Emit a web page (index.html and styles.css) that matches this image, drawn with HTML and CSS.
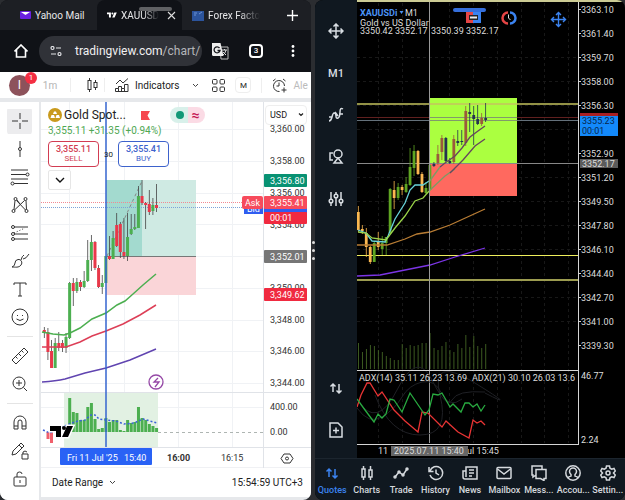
FILE: index.html
```html
<!DOCTYPE html>
<html lang="en">
<head>
    <meta charset="UTF-8">
    <meta name="viewport" content="width=device-width, initial-scale=1.0">
    <title>XAUUSD</title>
    <link rel="stylesheet" href="styles.css">
</head>
<body>
<div class="screen">
    <!-- Browser with the TradingView chart -->
    <section class="browser">
        <div class="handle"></div>
        <nav class="tabs">
            <a class="tab" href="#mail">
                <svg width="11" height="8" viewBox="0 0 11 8"><rect width="11" height="8" rx="1" fill="#6a1fe0"/><path d="M1 1l4.500 3L10 1z" fill="#fff"/></svg>
                <span>Yahoo Mail</span>
            </a>
            <a class="tab current" href="#chart">
                <svg width="10" height="6" viewBox="0 0 23 12" fill="#fff"><path d="M0 0h9v12H4.500V4.500H0zM17 0h5.500l-5 12H12z"/><circle cx="12.500" cy="2.300" r="2.300"/></svg>
                <span class="fade">XAUUSD</span>
            </a>
            <button class="close" aria-label="Close tab"><svg width="9" height="9" viewBox="0 0 9 9" stroke="#ddd" stroke-width="1.100"><path d="M1 1l7 7M8 1L1 8"/></svg></button>
            <a class="tab last" href="#forex">
                <svg width="12" height="11" viewBox="0 0 12 11"><path d="M0 1h12v10H0z" fill="#2c549c"/><path d="M2 3h3M2 5h2M7 4l3-2" stroke="#6d93d4"/></svg>
                <span class="fade">Forex Facto</span>
            </a>
            <button class="plus" aria-label="New tab"><svg width="11" height="11" viewBox="0 0 11 11" stroke="#fff" stroke-width="1.400"><path d="M5.500 0v11M0 5.500h11"/></svg></button>
        </nav>
        <div class="address">
            <button aria-label="Home"><svg width="14" height="14" viewBox="0 0 14 14" fill="none" stroke="#fff" stroke-width="1.600"><path d="M.5 7.500L7 1l6.500 6.500M2.500 6V13h9V6"/></svg></button>
            <div class="url">
                <svg width="12" height="10" viewBox="0 0 12 10" fill="none" stroke="#e4e5e8" stroke-width="1.200"><circle cx="2.500" cy="2" r="1.500"/><path d="M6 2h5M1 8h5"/><circle cx="9.500" cy="8" r="1.500"/></svg>
                <a href="#chart">tradingview.com<span>/chart/</span></a>
            </div>
            <button aria-label="Translate"><svg width="17" height="17" viewBox="0 0 17 17"><path d="M8 4h8v12H9z" fill="none" stroke="#bbb"/><path d="M0 0h8.500l3 13H1.500Q0 13 0 11.500z" fill="#eee"/><path d="M7.500 5a3 3 0 1 0 .5 2.500H5.500" fill="none" stroke="#14161b" stroke-width="1.300"/><path d="M10 7h5M12.500 6v1M14 7q-1 4-3 5M11 9l3 3" stroke="#ddd" fill="none"/></svg></button>
            <button class="count" aria-label="Open tabs">3</button>
            <button aria-label="Menu"><svg width="4" height="12" viewBox="0 0 4 12" fill="#fff"><circle cx="2" cy="1.500" r="1.400"/><circle cx="2" cy="6" r="1.400"/><circle cx="2" cy="10.500" r="1.400"/></svg></button>
        </div>

        <div class="tools">
            <button class="avatar">I<span class="badge">1</span></button>
            <button class="interval">1m</button>
            <button class="sep candles" aria-label="Candles"><svg width="12" height="14" viewBox="0 0 12 14" fill="none" stroke="#333"><rect x="1" y="2.500" width="3" height="9"/><path d="M2.500 0v2.500M2.500 11.500V14M8.500 2v2.500M8.500 9.500V12"/><rect x="7" y="4.500" width="3" height="5"/></svg></button>
            <button class="sep indicators"><svg width="14" height="14" viewBox="0 0 14 14" fill="none" stroke="#333"><path d="M1 6l4-4 3 3 5-4.500M.5 13.500v-3h3V8.500h3v2h3v-4h3.500v7zM3.500 10.500v3M6.500 10.500v3M9.500 10.500v3"/></svg>Indicators</button>
            <button aria-label="More indicators"><svg width="7" height="5" viewBox="0 0 7 5" fill="none" stroke="#444"><path d="M1 1l2.500 2.500L6 1"/></svg></button>
            <button class="layouts" aria-label="Layouts"><svg width="13" height="13" viewBox="0 0 13 13" fill="none" stroke="#333"><rect x=".5" y=".5" width="4.500" height="4.500" rx="1"/><rect x="8" y=".5" width="4.500" height="4.500" rx="1"/><rect x=".5" y="8" width="4.500" height="4.500" rx="1"/><rect x="8" y="8" width="4.500" height="4.500" rx="1"/></svg></button>
            <button class="layout-name">M</button>
            <button class="sep alert"><svg width="15" height="15" viewBox="0 0 15 15" fill="none" stroke="#333"><path d="M12.500 8a5.500 5.500 0 1 0-5 5.500M7 4.500V8H4.500M1 3l2.500-2M11 1l2.500 2M12 9.500v5M9.500 12h5"/></svg>Ale</button>
        </div>

        <div class="workspace">
            <aside class="draw">
                <button class="on" aria-label="Cross"><svg viewBox="0 0 20 20"><path d="M10 2v6M10 12v6M2 10h6M12 10h6"/></svg></button>
                <button aria-label="Vertical line"><svg viewBox="0 0 20 20"><path d="M10 2v6.500M10 11.500V18"/><circle cx="10" cy="10" r="1.500"/></svg></button>
                <button aria-label="Fib lines"><svg viewBox="0 0 20 20"><path d="M1 3h17M1 7.500h15M1 12h17M4 16.500h14"/><circle cx="17.500" cy="7.500" r="1.500"/><circle cx="2.500" cy="16.500" r="1.500"/></svg></button>
                <button aria-label="Patterns"><svg viewBox="0 0 20 20"><path d="M4 14.500L5 5.500M6.500 5.500L15.500 15M14.500 5.500L4.500 15M16 5.500l.5 9M7 5l3 4"/><circle cx="5.500" cy="4" r="1.500"/><circle cx="15.500" cy="4" r="1.500"/><circle cx="3.500" cy="16" r="1.500"/><circle cx="16.500" cy="16" r="1.500"/></svg></button>
                <button aria-label="Position"><svg viewBox="0 0 20 20"><path d="M4 4h14M4 11h14M4 16h14"/><path d="M4 10l11-5" stroke-dasharray="1 2"/><circle cx="3" cy="4" r="1.500"/><circle cx="3" cy="11" r="1.500"/><circle cx="3" cy="16" r="1.500"/></svg></button>
                <button aria-label="Brush"><svg viewBox="0 0 20 20"><path d="M2 16q3-1 3-4 0-3 3-3.500c3-.5 5 3 3 5.500-2 3-6 2-9 2M11 9q1-4 3-5M13 8q3 0 6-5"/></svg></button>
                <button aria-label="Text"><svg viewBox="0 0 20 20"><path d="M4 6V4h12v2M10 4v13M8 17h4"/></svg></button>
                <button aria-label="Emoji"><svg viewBox="0 0 20 20"><circle cx="10" cy="10" r="8"/><path d="M7.500 8v1M12.500 8v1M6.500 12q3.500 3 7 0"/></svg></button>
                <hr>
                <button aria-label="Measure"><svg viewBox="0 0 20 20"><path d="M2 14L14 2l4 4L6 18zM6 11l1.500 1.500M9 8l2 2M12 5l1.500 1.500"/></svg></button>
                <button aria-label="Zoom"><svg viewBox="0 0 20 20"><circle cx="9" cy="9" r="6"/><path d="M13.500 13.500L17 17M9 6v6M6 9h6"/></svg></button>
                <hr>
                <button aria-label="Magnet"><svg viewBox="0 0 20 20"><path d="M4 16V9a6 6 0 0 1 12 0v7h-4V9a2 2 0 0 0-4 0v7zM4 13h4M12 13h4"/></svg></button>
                <button aria-label="Keep drawing"><svg viewBox="0 0 20 20"><path d="M2 14l1-4 8-8 3 3-8 8zM9 4l3 3M12 13h6v5h-6zM13 13v-2q2-2 4 0"/></svg></button>
                <button aria-label="Lock"><svg viewBox="0 0 20 20"><rect x="4" y="8" width="12" height="9" rx="1"/><path d="M7 8V5q0-2 2.500-2T12 5M10 11v3"/></svg></button>
            </aside>

            <div class="chart-side">
                <div class="chart">
                    <svg id="tv" class="plot" viewBox="41 102 270 366">
                        <g stroke="#f0f2f5">
                            <path d="M41 129.500H263M41 161.500H263M41 193.500H263M41 224.500H263M41 256.500H263M41 288.500H263M41 320.500H263M41 351.500H263M41 383.500H263M41 407.500H263M69.500 102V447M124.500 102V447M178.500 102V447M232.500 102V447"/>
                        </g>
                        <rect x="106" y="180" width="90" height="76" fill="#cfeae3"/>
                        <rect x="106" y="180" width="36" height="76" fill="#a3dacf"/>
                        <rect x="106" y="256" width="90" height="39" fill="#fad5d8"/>
                        <path d="M106 256.500h90" stroke="#777"/>
                        <path d="M107 256L142 181" stroke="#888" stroke-dasharray="3 3"/>
                        <rect x="64" y="393" width="94" height="54" fill="#e2f1e3"/>
                        <path d="M41 202.500H263" stroke="#f08a92" stroke-dasharray="1 1"/>
                        <path d="M41 207.500H263" stroke="#7ba3d8" stroke-dasharray="1 1"/>
                        <g id="tvCandles"></g>
                        <g fill="none" stroke-width="1.500">
                            <path stroke="#4caf50" d="M42 332L53 334L64 335L70 333L80 328L92 319L106 313L117 305L125 301L133 294L143 285L156 274"/>
                            <path stroke="#dd3f57" d="M42 347H66L80 342L92 336L106 331L123 324L140 315L156 305"/>
                            <path stroke="#6044b0" d="M42 382Q56 381 65 379L85 373L106 368L130 360L156 349"/>
                            <path stroke="#3b62d8" stroke-dasharray="2 2" d="M43 430L50 433L60 428L72 423L78 421L85 420L91 415L95 415L99 419L106 420L116 421L124 424L134 423L143 419L150 421L157 423"/>
                        </g>
                        <path d="M158 432.500H263" stroke="#aeb5b2" stroke-dasharray="3 3"/>
                        <path d="M50 426h11v11h-5v-6h-6zM67 426h6l-5 11h-6z" stroke="#fff" stroke-width="3"/>
                        <path d="M50 426h11v11h-5v-6h-6zM67 426h6l-5 11h-6z"/><circle cx="64" cy="428" r="2"/>
                        <path d="M41 392.500H311M41 447.500H311M41 468H311M263.500 102V468" stroke="#e0e3e8" fill="none"/>
                        <path d="M106 102V447" stroke="#3564cf" stroke-width="1.500"/>
                        <circle cx="156" cy="382" r="7" fill="#fff" stroke="#9548a6" stroke-width="1.300"/>
                        <path d="M158 378l-4 4h5l-4 5" fill="none" stroke="#9548a6" stroke-width="1.300"/>
                        <g class="axis">
                            <text x="270" y="132">3,360.00</text><text x="270" y="164">3,358.00</text>
                            <text x="270" y="196">3,356.00</text><text x="270" y="228">3,354.00</text>
                            <text x="270" y="291">3,350.00</text><text x="270" y="323">3,348.00</text>
                            <text x="270" y="354">3,346.00</text><text x="270" y="386">3,344.00</text>
                            <text x="270" y="410">400.00</text><text x="270" y="435">0.00</text>
                        </g>
                        <rect x="244" y="204" width="19" height="10" fill="#2f5df0"/>
                        <g class="tag"><text x="247" y="212">Bid</text></g>
                        <rect x="264" y="208" width="43" height="8" fill="#2f5df0"/>
                        <rect x="264" y="174" width="43" height="13" rx="1" fill="#089273"/>
                        <rect x="264" y="212" width="43" height="12" rx="1" fill="#f02a40"/>
                        <rect x="264" y="196" width="43" height="13" rx="1" fill="#f74b5c"/>
                        <rect x="242" y="196" width="21" height="13" rx="2" fill="#f74b5c"/>
                        <rect x="264" y="250" width="43" height="13" rx="1" fill="#767676"/>
                        <rect x="264" y="288" width="43" height="13" rx="1" fill="#f02a40"/>
                        <g class="tag">
                            <text x="270" y="184">3,356.80</text><text x="270" y="206">3,355.41</text><text x="270" y="221">00:01</text>
                            <text x="245" y="206">Ask</text><text x="270" y="260">3,352.01</text><text x="270" y="298">3,349.62</text>
                        </g>
                        <rect x="60" y="448" width="92" height="17" rx="1" fill="#2962f5"/>
                        <g class="tag"><text x="67" y="461">Fri 11 Jul '25</text><text x="124" y="461">15:40</text></g>
                        <g class="axis"><text class="bold" x="167" y="461">16:00</text><text x="221" y="461">16:15</text></g>
                        <path d="M284 454h6l3 4.500-3 4.500h-6l-3-4.500z" fill="none" stroke="#333"/><circle cx="287" cy="458.500" r="1.500" fill="none" stroke="#333"/>
                    </svg>

                    <div class="legend">
                        <div class="symbol">
                            <svg width="14" height="14" viewBox="0 0 14 14"><circle cx="7" cy="7" r="7" fill="#c99a1c"/><path d="M5 6l1-2.500h2L9 6zM2.500 10l1-3h2.500l1 3zM7.500 10l1-3H11l1 3z" fill="#fff"/></svg>
                            <h1>Gold Spot...</h1>
                            <svg width="9" height="9" viewBox="0 0 9 9"><path d="M0 0h9L6.500 4.500 9 9H0z" fill="#f5474f"/></svg>
                            <span class="status"><i></i><b>≈</b></span>
                        </div>
                        <p class="change">3,355.11 +31.35 (+0.94%)</p>
                        <div class="trade">
                            <button class="sell"><b>3,355.11</b>SELL</button>
                            <span>30</span>
                            <button class="buy"><b>3,355.41</b>BUY</button>
                        </div>
                        <button class="collapse" aria-label="Collapse"><svg width="10" height="6" viewBox="0 0 10 6" fill="none" stroke="#111" stroke-width="1.400"><path d="M1 1l4 4 4-4"/></svg></button>
                    </div>
                    <select class="currency" aria-label="Currency"><option>USD</option></select>
                    <svg class="arrow" width="6" height="4" viewBox="0 0 6 4" fill="none" stroke="#222" stroke-width="1.200"><path d="M1 .5l2 2 2-2"/></svg>
                </div>
                <footer class="range">
                    <button>Date Range <svg width="7" height="5" viewBox="0 0 7 5" fill="none" stroke="#444"><path d="M1 1l2.500 2.500L6 1"/></svg></button>
                    <span>15:54:59 UTC+3</span>
                </footer>
            </div>
        </div>
    </section>

    <div class="divider"><i></i><i></i><i></i></div>

    <!-- MetaTrader -->
    <section class="terminal">
        <div class="handle blue"></div>
        <div class="main">
            <aside class="rail">
                <button aria-label="Crosshair"><svg viewBox="0 0 16 16"><path d="M8 1v14M1 8h14M5.500 3.500L8 1l2.500 2.500M5.500 12.500L8 15l2.500-2.500M3.500 5.500L1 8l2.500 2.500M12.500 5.500L15 8l-2.500 2.500"/></svg></button>
                <button>M1</button>
                <button aria-label="Indicators"><svg viewBox="0 0 16 16"><path d="M1 14q2 0 3-4t2-4q2 0 2 3t2 2q2-1 2-6t3-3M1 10h3M7 5l3 4M11 7h4"/></svg></button>
                <button aria-label="Objects"><svg viewBox="0 0 16 16"><path d="M5 4H2v7h3M6 14h8l-4-5z"/><circle cx="10" cy="5" r="4"/></svg></button>
                <button aria-label="Settings"><svg viewBox="0 0 16 16"><path d="M3 1v7M3 12v3M8 1v2M8 7v8M13 1v7M13 12v3"/><circle cx="3" cy="10" r="1.800"/><circle cx="8" cy="5" r="1.800"/><circle cx="13" cy="10" r="1.800"/></svg></button>
                <button class="down" aria-label="Trade"><svg viewBox="0 0 16 16"><path d="M5 12V4M2.500 6.500L5 4l2.500 2.500M11 4v9M8.500 10.500L11 13l2.500-2.500"/></svg></button>
                <button aria-label="New order"><svg viewBox="0 0 16 16"><path d="M2 1h8l4 4v10H2zM8 5.500v6M5 8.500h6"/></svg></button>
            </aside>
            <svg class="plot" viewBox="357 0 268 458">
                <path d="M357 57.500H578M357 81.500H578M357 105.500H578M357 129.500H578M357 177.500H578M357 201.500H578M357 225.500H578M357 249.500H578M357 297.500H578M357 321.500H578M378.500 3V443M402.500 3V443M449.500 3V443M473.500 3V443M497.500 3V443M521.500 3V443M544.500 3V443M568.500 3V443" stroke="#181818" stroke-dasharray="3 3"/>
                <rect x="357" y="0" width="268" height="2" fill="#cccb94"/>
                <rect x="430" y="98" width="87" height="66" fill="#abff40"/>
                <rect x="430" y="164" width="87" height="32" fill="#ff695f"/>
                <path d="M357 104H578" stroke="#c4c35e" stroke-width="1.500"/>
                <path d="M357 117.500H578" stroke="#61201f"/>
                <path d="M357 120.500H578" stroke="#65717b"/>
                <path d="M357 163.500H578" stroke="#888"/>
                <path d="M357 255.500H578" stroke="#eeee5c" stroke-width="1.200"/>
                <path d="M357 280H578" stroke="#9c9c50" stroke-width="2"/>
                <path d="M430 117.500H517M430 120.500H517" stroke="#819b6b"/>
                <g id="mtCandles"></g>
                <g fill="none" stroke-width="1.300">
                    <path stroke="#68d3da" d="M358 230L366 233L372 241L385 242L388 236L395 219L405 203L410 190L415 185L423 185L429 181"/>
                    <path stroke="#9bd44a" d="M358 232L366 233L372 238L386 240L395 228L405 216L415 201L423 198L430 190"/>
                    <path stroke="#7d9a65" d="M429 182L440 167M430 190L445 176L455 169"/>
                    <path stroke="#66455e" d="M440 167L445 163L455 156L462 148L470 137L478 131L485 126M450 173L463 160L475 146L485 139"/>
                    <path stroke="#b97d34" d="M357 245H387L405 239L417 234L430 232L450 225L485 209"/>
                    <path stroke="#7c35e6" d="M357 276L380 275L405 270L430 265L455 257L485 248"/>
                </g>
                <path d="M429.500 2V443" stroke="#999"/>
                <g fill="none" stroke="#1f2025">
                    <path d="M357 408q12 17 25 9t20-20 20-15 20 12 20 5M357 400q20 30 40-10t35-10 20 20 33-8M375 395q15 40 45 40t20-40 35-12 10 10"/>
                </g>
                <g fill="none" stroke-width="1.300">
                    <path stroke="#e93434" d="M357 407L361 395L367 383H370L378 396L382 392L394 410L405 421L418 432L422 412L428 413L442 427L446 421L458 432L469 438L473 420L477 423L481 421L485 425"/>
                    <path stroke="#28ab40" d="M357 399L365 410L374 422L378 414L382 418L386 414L390 399L394 400L402 412L410 393L425 415L429 410L433 394L438 395L442 393L450 407L453 404L461 412L465 403L469 403L473 407L477 404L481 411L485 405"/>
                </g>
                <path d="M357 370.500H578M357 444.500H579M578.500 2V445M578 9.500h3M578 33.500h3M578 57.500h3M578 81.500h3M578 105.500h3M578 153.500h3M578 177.500h3M578 201.500h3M578 225.500h3M578 249.500h3M578 273.500h3M578 297.500h3M578 321.500h3M578 345.500h3" stroke="#d5d5d5" fill="none"/>
                <rect x="580" y="113" width="38" height="4" fill="#a81f22"/>
                <rect x="580" y="116" width="38" height="20" fill="#1389fa"/>
                <rect x="580" y="159" width="38" height="9" fill="#5b5b5b"/>
                <g class="mt-axis">
                    <text x="581" y="13">3363.10</text><text x="581" y="37">3361.40</text><text x="581" y="61">3359.70</text><text x="581" y="85">3358.00</text><text x="581" y="109">3356.30</text>
                    <text x="581" y="157">3352.90</text><text x="581" y="181">3351.20</text><text x="581" y="205">3349.50</text><text x="581" y="229">3347.80</text><text x="581" y="253">3346.10</text>
                    <text x="581" y="277">3344.40</text><text x="581" y="301">3342.70</text><text x="581" y="325">3341.00</text><text x="581" y="349">3339.30</text>
                    <text x="582" y="167">3352.17</text><text class="dark" x="582" y="124">3355.23</text><text class="dark" x="582" y="134">00:01</text>
                    <text x="581" y="379">46.77</text><text x="581" y="443">2.24</text>
                    <text x="359" y="381">ADX(14) 35.11 26.23 13.69</text><text x="472" y="381">ADX(21) 30.10 26.03 13.6</text>
                    <text x="378" y="454">11</text><text x="467" y="454">ul 15:45</text>
                    <rect x="391" y="446" width="77" height="10" fill="#666"/>
                    <text x="394" y="454">2025.07.11 15:40</text>
                    <text class="blue" x="360" y="16">XAUUSDi</text><text x="405" y="16">M1</text>
                    <text x="360" y="26">Gold vs US Dollar</text>
                    <text x="360" y="34">3350.42 3352.17</text><text x="431" y="34">3350.39 3352.17</text>
                </g>
                <path d="M399.500 11h4l-2 3z" fill="#4b93f5"/>
                <path d="M466 12h7v11h-7z" fill="#e54545"/><path d="M473 12h8v11h-8z" fill="#3b83f0"/>
                <path d="M469 15h9v5h-9z" fill="#222"/><path d="M470 17.500h7" stroke="#eee" stroke-width="2"/>
                <g fill="none">
                    <path d="M508 12.500a5.500 5.500 0 0 0 0 11" stroke="#e54545" stroke-width="2.500"/><path d="M510 12.500a5.500 5.500 0 0 1 0 11" stroke="#3b83f0" stroke-width="2.500"/><path d="M508.500 14.500V18l2 2" stroke="#ddd"/>
                    <path d="M558.500 13v13M552 19.500h13M556 15l2.500-2.500L561 15M556 24l2.500 2.500L561 24M554 17l-2.500 2.500L554 22M563 17l2.500 2.500L563 22" stroke="#3b83f0" stroke-width="1.400"/>
                </g>
            </svg>
        </div>
        <nav class="bottom">
            <a class="active" href="#quotes"><svg viewBox="0 0 16 16"><path d="M5 12V4M2.500 6.500L5 4l2.500 2.500M11 4v9M8.500 10.500L11 13l2.500-2.500"/></svg>Quotes</a>
            <a href="#charts"><svg viewBox="0 0 16 16"><path d="M3 4h3v8H3zM4.500 1v3M4.500 12v3M10 5h3v7h-3zM11.500 1v4M11.500 12v3"/></svg>Charts</a>
            <a href="#trade"><svg viewBox="0 0 16 16"><path d="M2 12l4-5 4 3 4-6"/><circle cx="2" cy="12" r="1"/><circle cx="6" cy="7" r="1"/><circle cx="10" cy="10" r="1"/><circle cx="14" cy="4" r="1"/></svg>Trade</a>
            <a href="#history"><svg viewBox="0 0 16 16"><path d="M2 6a6.500 6.500 0 1 1 0 4M1 2v4.500h4.500M8 4.500V8l3 2"/></svg>History</a>
            <a href="#news"><svg viewBox="0 0 16 16"><path d="M4 2h11v12H3q-2 0-2-2V6h3zM4 6v6M7 5h5M7 8h5M7 11h3"/></svg>News</a>
            <a href="#mailbox"><svg viewBox="0 0 16 16"><rect x="1" y="2.500" width="14" height="11" rx="1"/><path d="M1.500 4L8 9l6.500-5"/></svg>Mailbox</a>
            <a href="#messages"><svg viewBox="0 0 16 16"><path d="M5 10L2 12V10H1V1h10v3M5 4.500h10v9h-2V15.500L9.500 13.500H5z"/></svg>Mess...</a>
            <a href="#accounts"><svg viewBox="0 0 16 16"><circle cx="8" cy="8" r="7.200"/><path d="M3 13q.5-1.500 3-2V9.500Q4.500 8 4.500 6.500a3.500 3.500 0 0 1 7 0Q11.500 8 10 9.500V11q2.500.5 3 2"/></svg>Accou...</a>
            <a href="#settings"><svg viewBox="0 0 16 16"><path d="M6.500 1h3l.5 2.200 1.700 1L14 3.500l1.300 2.500L13.500 8l1.800 2-1.300 2.500-2.300-.7-1.700 1L9.500 15h-3L6 12.800l-1.700-1-2.300.7L.7 10 2.500 8 .7 6 2 3.500l2.300.7 1.700-1z"/><circle cx="8" cy="8" r="2"/></svg>Settin...</a>
        </nav>
    </section>
</div>
<script>
    // candle: [wick top, wick bottom, body top, body bottom, up?]
    const tvCandles = [
        [327,338,330,333,0],[328,360,332,352,0],[340,368,351,368,0],[338,368,343,368,1],[332,351,343,348,0],[340,352,343,348,0],[333,353,337,348,1],
        [282,339,283,338,1],[278,306,283,291,0],[278,293,282,291,1],[280,291,282,287,0],[271,288,281,287,1],[240,282,260,281,1],[235,271,242,260,1],
        [241,270,242,268,0],[265,288,268,287,0],[275,294,283,287,1],[256,283,256,283,1],[236,260,256,259,0],[231,259,238,259,1],[213,247,225,246,0],
        [222,258,224,252,0],[218,259,252,256,0],[213,261,237,256,1],[214,235,229,234,1],[214,230,227,229,1],[186,228,196,228,1],[180,205,196,203,0],
        [202,229,203,205,0],[190,215,204,212,0],[198,215,205,211,1],[184,212,205,208,0]
    ];
    // volume bar tops, from the 8th candle on
    const volumes = [398,412,413,420,420,407,403,419,429,428,418,422,420,420,430,431,420,423,422,407,418,420,424,426,428];

    const mtCandles = [
        [206,232,212,230,0],[225,234,229,231,0],[228,257,233,247,0],[246,264,247,262,0],[242,262,243,262,1],[232,250,241,247,0],[236,255,243,249,1],[237,255,237,243,1],
        [188,234,189,233,1],[181,209,190,198,0],[183,200,187,198,1],[185,195,187,190,0],[177,193,184,192,1],[148,186,167,185,1],[145,176,151,168,1],[150,175,151,174,0],
        [172,193,174,192,0],[182,194,188,193,1],[164,191,165,190,1],[162,167,164,166,1],[145,165,154,163,0],[135,160,138,152,0],[137,162,138,161,1],[158,164,161,163,1],
        [135,164,139,162,0],[130,146,141,143,1],[130,145,141,142,1],[106,146,111,143,0],[103,132,112,114,1],[106,145,115,119,1],[105,125,119,124,1],[113,126,118,124,0],[103,122,118,120,1]
    ];
    const mtVolumes = [343,352,349,345,346,350,352,356,358,360,360,344,348,345,346,345,343,343,333,348,350,346,342,350,352,344,348,335,347,336,346,348,344];

    function bar(x, y, w, h, fill) {
        return `<rect x="${x}" y="${y}" width="${w}" height="${h}" fill="${fill}"/>`;
    }

    let out = '';
    tvCandles.forEach((c, i) => {
        const x = 44.3 + i * 3.62;
        out += bar(x - 0.4, c[0], 0.8, c[1] - c[0], '#444');
        out += bar(x - 1.5, c[2], 3, c[3] - c[2], c[4] ? '#4caf50' : '#e8384a');
    });
    volumes.forEach((top, i) => {
        out += bar(68.2 + i * 3.62, top, 3, 432 - top, '#4caf50');
    });
    out += bar(46.5, 432, 3, 7, '#f0606c') + bar(50, 432, 3, 11, '#f0606c');
    document.getElementById('tvCandles').innerHTML = out;

    out = '';
    mtCandles.forEach((c, i) => {
        const x = 358.3 + i * 3.98;
        // candles drawn over the position box use the inverted colours
        const up = i > 18 ? '#25344f' : '#5fa522';
        const down = i > 18 ? '#9a5a3c' : '#fbb850';
        const fill = c[4] ? up : down;
        out += bar(x - 0.4, c[0], 0.8, c[1] - c[0], fill);
        out += bar(x - 1.4, c[2], 2.8, c[3] - c[2], fill);
    });
    mtVolumes.forEach((top, i) => {
        out += bar(358 + i * 3.98, top, 0.8, 369 - top, '#4a7028');
    });
    document.getElementById('mtCandles').innerHTML = out;
</script>
</body>
</html>
```
FILE: styles.css
```css
* {
    box-sizing: border-box;
}
body {
    margin: 0;
    background: #2b2d31;
    font-family: Roboto, "Liberation Sans", sans-serif;
    font-size: 10px;
    color: #222;
}
button {
    font: inherit;
    color: inherit;
    background: none;
    border: 0;
    padding: 0;
    display: flex;
    align-items: center;
    justify-content: center;
}
a {
    color: inherit;
    text-decoration: none;
}
svg {
    flex: none;
}
.screen {
    display: grid;
    grid-template-columns: 311fr 4px 310fr;
    min-height: 100vh;
}
.handle {
    position: absolute;
    top: 7px;
    left: 139px;
    width: 33px;
    height: 4px;
    border-radius: 2px;
    background: #606164;
}
.handle.blue {
    left: 138px;
    top: 8px;
    background: #356fdc;
}

/* browser */
.browser {
    position: relative;
    display: flex;
    flex-direction: column;
    min-width: 0;
    background: #101217;
    border-radius: 8px;
    overflow: hidden;
}
.tabs {
    display: flex;
    height: 30px;
    background: #1d1f24;
    color: #e6e6e8;
    font-size: 10px;
}
.tab {
    display: flex;
    align-items: center;
    gap: 4px;
    width: 97px;
    padding-left: 20px;
    white-space: nowrap;
    overflow: hidden;
}
.tab.current {
    width: 64px;
    padding-left: 10px;
    background: #101217;
    border-radius: 8px 0 0 0;
}
.tab.last {
    width: 100px;
    padding-left: 10px;
}
.fade {
    mask-image: linear-gradient(to right, #000 60%, transparent);
}
.close {
    width: 21px;
    background: #101217;
    border-radius: 0 8px 0 0;
}
.plus {
    flex: 1;
    padding-left: 0;
    margin-right: 8px;
}
.address {
    display: flex;
    align-items: center;
    height: 42px;
    padding: 0 16px 0 14px;
}
.url {
    display: flex;
    align-items: center;
    gap: 13px;
    flex: 1;
    height: 30px;
    margin: 0 10px 0 11px;
    padding-left: 11px;
    border-radius: 15px;
    background: #303238;
    color: #f0f0f2;
    font-size: 12px;
    white-space: nowrap;
}
.url span {
    color: #b5b6ba;
}
.count {
    width: 14px;
    height: 14px;
    margin: 0 28px 0 20px;
    border: 2px solid #fff;
    border-radius: 4px;
    color: #fff;
    font-size: 8px;
    line-height: 10px;
    font-weight: 500;
}
.tools {
    display: flex;
    align-items: center;
    height: 30px;
    padding-left: 9px;
    background: #fff;
    border-bottom: 4px solid #e6e8eb;
    white-space: nowrap;
    overflow: hidden;
}
.tools button {
    flex: none;
}
.avatar {
    position: relative;
    width: 21px;
    height: 21px;
    border-radius: 50%;
    background: #8d525b;
    color: #fff;
    font-size: 12px;
}
.badge {
    position: absolute;
    top: -3px;
    right: -7px;
    width: 12px;
    height: 12px;
    border-radius: 50%;
    background: #f42f43;
    font-size: 8px;
    line-height: 12px;
}
.interval {
    width: 40px;
    color: #b4b4b4;
}
.tools .sep {
    border-left: 1px solid #eee;
    padding-left: 10px;
}
.candles {
    width: 34px;
}
.indicators {
    gap: 6px;
    margin-right: 13px;
}
.layouts {
    margin-left: 13px;
}
.layout-name {
    width: 16px;
    height: 16px;
    margin: 0 10px;
    border: 1px solid #eee;
    border-radius: 4px;
    font-size: 8px;
}
.alert {
    gap: 6px;
    color: #bbb;
}

.workspace {
    display: flex;
    flex: 1;
    background: #e6e8eb;
}
.draw {
    width: 39px;
    padding-top: 5px;
    background: #fff;
    display: flex;
    flex-direction: column;
    align-items: center;
}
.draw button {
    width: 25px;
    height: 28px;
}
.draw .on {
    border-radius: 4px;
    background: linear-gradient(#ececee, #ececee) center / 25px 25px no-repeat;
}
.draw svg {
    width: 20px;
    height: 20px;
    fill: none;
    stroke: #333;
}
.draw hr {
    width: 26px;
    margin: 5px 0 5px;
    border: 0;
    border-top: 1px solid #e4e4e4;
}
.chart-side {
    flex: 1;
    display: flex;
    flex-direction: column;
    margin: 0 0 3px 2px;
    background: #fff;
}
.chart {
    position: relative;
}
.plot {
    display: block;
    width: 100%;
    height: auto;
}
.axis {
    font-size: 9px;
    fill: #333;
}
.axis .bold {
    font-weight: bold;
}
.tag {
    font-size: 9px;
    fill: #fff;
}
.legend {
    position: absolute;
    top: 5px;
    left: 7px;
}
.symbol {
    display: flex;
    align-items: center;
    height: 16px;
}
.symbol h1 {
    margin: 0 15px 0 2px;
    font-size: 12px;
    font-weight: normal;
}
.status {
    display: flex;
    align-items: center;
    margin-left: 20px;
    width: 35px;
    height: 16px;
    border-radius: 8px;
    background: linear-gradient(to right, #d8f0ea 50%, #fbdbe5 50%);
}
.status i {
    width: 8px;
    height: 8px;
    margin: 0 8px 0 6px;
    border-radius: 50%;
    background: #129877;
}
.status b {
    color: #c51a55;
    font-size: 14px;
    line-height: 16px;
}
.change {
    margin: 2px 0 4px;
    color: #4fa853;
    line-height: 12px;
}
.trade {
    display: flex;
    align-items: center;
    gap: 5px;
    font-size: 8px;
}
.trade button {
    flex-direction: column;
    width: 51px;
    height: 26px;
    border: 1px solid;
    border-radius: 4px;
    background: #fff;
    line-height: 10px;
}
.trade b {
    font-size: 9px;
    font-weight: 500;
}
.trade .sell {
    color: #d23c52;
}
.trade .buy {
    color: #3d62cc;
}
.collapse {
    width: 23px;
    height: 20px;
    margin-top: 3px;
    border: 1px solid #e6e6e6;
    border-radius: 2px;
    background: #fff;
}
.currency {
    position: absolute;
    top: 3px;
    right: 4px;
    width: 42px;
    height: 20px;
    padding: 0 4px;
    appearance: none;
    border: 1px solid #eee;
    border-radius: 4px;
    background: #fff;
    color: #222;
    font: 9px Roboto, sans-serif;
}
.arrow {
    position: absolute;
    top: 11px;
    right: 7px;
}
.range {
    display: flex;
    flex: 1;
    align-items: center;
    justify-content: space-between;
    padding: 0 8px 0 11px;
}
.range button {
    gap: 6px;
}

/* split screen divider */
.divider {
    display: flex;
    flex-direction: column;
    align-items: center;
    justify-content: center;
    gap: 5px;
}
.divider i {
    width: 3px;
    height: 3px;
    border-radius: 50%;
    background: #ddd;
}

/* terminal */
.terminal {
    position: relative;
    display: flex;
    flex-direction: column;
    min-width: 0;
    background: #000;
    border-radius: 8px;
    overflow: hidden;
}
.main {
    display: grid;
    grid-template-columns: 42px 1fr;
}
.rail {
    display: flex;
    flex-direction: column;
    padding: 10px 0 7px;
    background: #101820;
    color: #d8dde2;
    font-size: 11px;
    font-weight: 500;
}
.rail button {
    height: 42px;
}
.rail .down {
    margin-top: auto;
}
.rail svg,
.bottom svg {
    width: 16px;
    height: 16px;
    fill: none;
    stroke: currentColor;
    stroke-width: 1.5px;
}
.mt-axis {
    font-size: 9px;
    fill: #ddd;
}
.mt-axis .dark {
    fill: #07264a;
}
.mt-axis .blue {
    fill: #4b93f5;
    font-weight: bold;
}
.bottom {
    display: grid;
    grid-template-columns: repeat(9, 1fr);
    flex: 1;
    border-top: 1px solid #1c252e;
    background: #101820;
    color: #d5d9dd;
    font-size: 9px;
    font-weight: 500;
}
.bottom a {
    display: flex;
    flex-direction: column;
    align-items: center;
    gap: 4px;
    min-width: 0;
    padding-top: 6px;
    white-space: nowrap;
}
.bottom .active {
    color: #3b83f0;
}
```
